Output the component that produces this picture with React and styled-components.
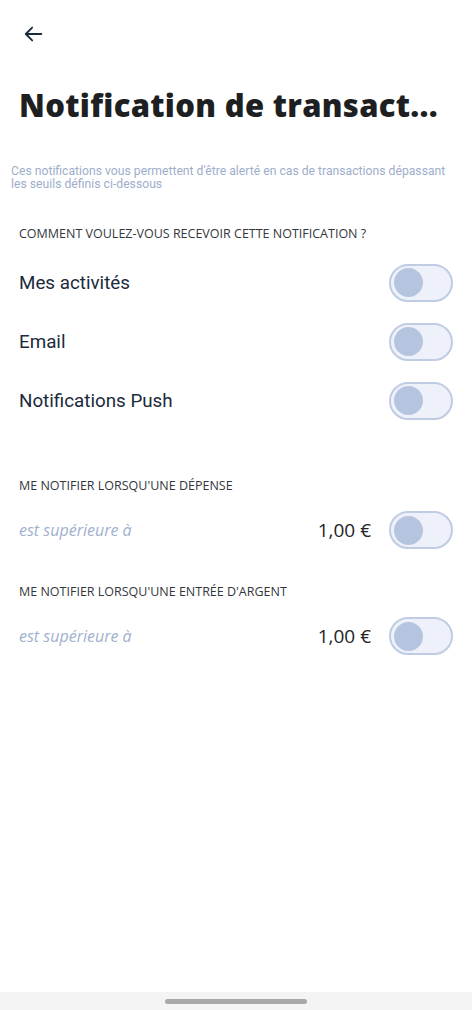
import React from "react";
import styled, { createGlobalStyle } from "styled-components";

const Global = createGlobalStyle`
  html, body { margin: 0; padding: 0; background: #fff; }
  body { font-family: "Roboto", "Liberation Sans", sans-serif; }
  #root { min-height: 1010px; }
`;

const Screen = styled.div`
  width: 472px;
  height: 1010px;
  display: flex;
  flex-direction: column;
  background: #fff;
  overflow: hidden;
`;

const Content = styled.div`
  flex: 1;
  display: flex;
  flex-direction: column;
`;

const TopBar = styled.div`
  height: 68px;
  display: flex;
  align-items: center;
  padding-left: 22px;
  box-sizing: border-box;
`;

const BackButton = styled.button`
  border: 0;
  background: none;
  padding: 0;
  width: 24px;
  height: 24px;
  display: flex;
  align-items: center;
  justify-content: center;
  color: #1b2a3c;
`;

const Title = styled.h1`
  margin: 16px 0 0 19px;
  font-family: "Open Sans", "Liberation Sans", sans-serif;
  font-weight: 800;
  font-size: 31px;
  letter-spacing: 0.3px;
  color: #1d1f22;
  white-space: nowrap;
`;

const Description = styled.p`
  margin: 39px 18px 0 11px;
  font-family: "Roboto", "Liberation Sans", sans-serif;
  font-size: 12.2px;
  line-height: 13px;
  color: #9eaecb;
`;

const SectionLabel = styled.div`
  margin: ${(p) => p.$top}px 0 0 19px;
  font-family: "Open Sans", "Liberation Sans", sans-serif;
  font-weight: 500;
  font-size: 12.5px;
  color: #33373c;
`;

const Row = styled.div`
  height: ${(p) => p.$h || 59}px;
  display: flex;
  align-items: center;
  padding: 0 19px;
  gap: 18px;
`;

const RowLabel = styled.span`
  flex: 1;
  font-family: "Roboto", "Liberation Sans", sans-serif;
  font-size: 18.8px;
  color: #1b2a3c;
`;

const HintLabel = styled.span`
  flex: 1;
  font-family: "Open Sans", "Liberation Sans", sans-serif;
  font-style: italic;
  font-size: 16px;
  color: #a0b1cd;
`;

const Amount = styled.span`
  font-family: "Open Sans", "Liberation Sans", sans-serif;
  font-size: 19px;
  color: #222428;
`;

const Track = styled.div`
  width: 64px;
  height: 38px;
  box-sizing: border-box;
  border: 2.5px solid #bfcce3;
  border-radius: 20px;
  background: #eef1f9;
  display: flex;
  align-items: center;
  padding-left: 3px;
  flex-shrink: 0;
`;

const Knob = styled.div`
  width: 29px;
  height: 29px;
  border-radius: 50%;
  background: #b6c5df;
`;

const Spacer = styled.div`
  height: ${(p) => p.$h}px;
`;

const NavBar = styled.div`
  height: 18px;
  background: #f4f4f4;
  display: flex;
  justify-content: center;
  align-items: center;
`;

const Handle = styled.div`
  width: 142px;
  height: 5px;
  border-radius: 3px;
  background: #a9a9a9;
`;

const Toggle = () => (
  <Track>
    <Knob />
  </Track>
);

export default function App() {
  return (
    <Screen>
      <Global />
      <Content>
        <TopBar>
          <BackButton aria-label="Retour">
            <svg width="22" height="22" viewBox="0 0 24 24" fill="none" stroke="currentColor" strokeWidth="2" strokeLinecap="round" strokeLinejoin="round">
              <path d="M20 12H4" />
              <path d="M10 5l-7 7 7 7" />
            </svg>
          </BackButton>
        </TopBar>
        <Title>Notification de transact...</Title>
        <Description>
          Ces notifications vous permettent d'être alerté en cas de transactions dépassant les seuils définis ci-dessous
        </Description>
        <SectionLabel $top={34}>COMMENT VOULEZ-VOUS RECEVOIR CETTE NOTIFICATION ?</SectionLabel>
        <Spacer $h={11} />
        <Row>
          <RowLabel>Mes activités</RowLabel>
          <Toggle />
        </Row>
        <Row>
          <RowLabel>Email</RowLabel>
          <Toggle />
        </Row>
        <Row>
          <RowLabel>Notifications Push</RowLabel>
          <Toggle />
        </Row>
        <SectionLabel $top={47}>ME NOTIFIER LORSQU'UNE DÉPENSE</SectionLabel>
        <Row $h={72}>
          <HintLabel>est supérieure à</HintLabel>
          <Amount>1,00 €</Amount>
          <Toggle />
        </Row>
        <SectionLabel $top={17}>ME NOTIFIER LORSQU'UNE ENTRÉE D'ARGENT</SectionLabel>
        <Row $h={72}>
          <HintLabel>est supérieure à</HintLabel>
          <Amount>1,00 €</Amount>
          <Toggle />
        </Row>
      </Content>
      <NavBar>
        <Handle />
      </NavBar>
    </Screen>
  );
}
